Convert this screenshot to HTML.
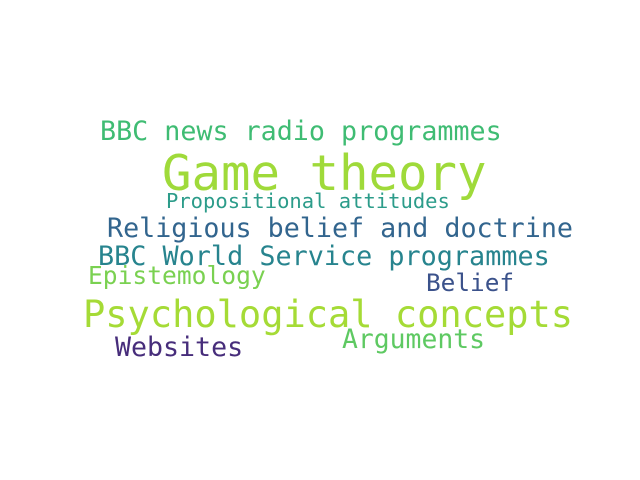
<!DOCTYPE html>
<html><head><meta charset="utf-8"><style>
html,body{margin:0;padding:0;background:#fff;width:640px;height:480px;overflow:hidden;position:relative}
span{position:absolute;font-family:"DejaVu Sans Mono","Liberation Mono",monospace;line-height:1;white-space:nowrap}
</style></head><body>
<span style="left:100px;top:119px;font-size:26.7px;color:#3fbc73">BBC news radio programmes</span>
<span style="left:162px;top:149px;font-size:49px;color:#9fda3a">Game theory</span>
<span style="left:166px;top:191px;font-size:20.5px;color:#2c9c8a">Propositional attitudes</span>
<span style="left:107px;top:216px;font-size:26.7px;color:#32658e">Religious belief and doctrine</span>
<span style="left:98px;top:244px;font-size:26.8px;color:#27848e">BBC World Service programmes</span>
<span style="left:88px;top:264px;font-size:24.6px;color:#7ad151">Epistemology</span>
<span style="left:426px;top:271px;font-size:24.4px;color:#3b528b">Belief</span>
<span style="left:83px;top:296px;font-size:37px;color:#a5db36">Psychological concepts</span>
<span style="left:342px;top:327px;font-size:26.4px;color:#5ec962">Arguments</span>
<span style="left:115px;top:335px;font-size:26.6px;color:#472d7b">Websites</span>
</body></html>
